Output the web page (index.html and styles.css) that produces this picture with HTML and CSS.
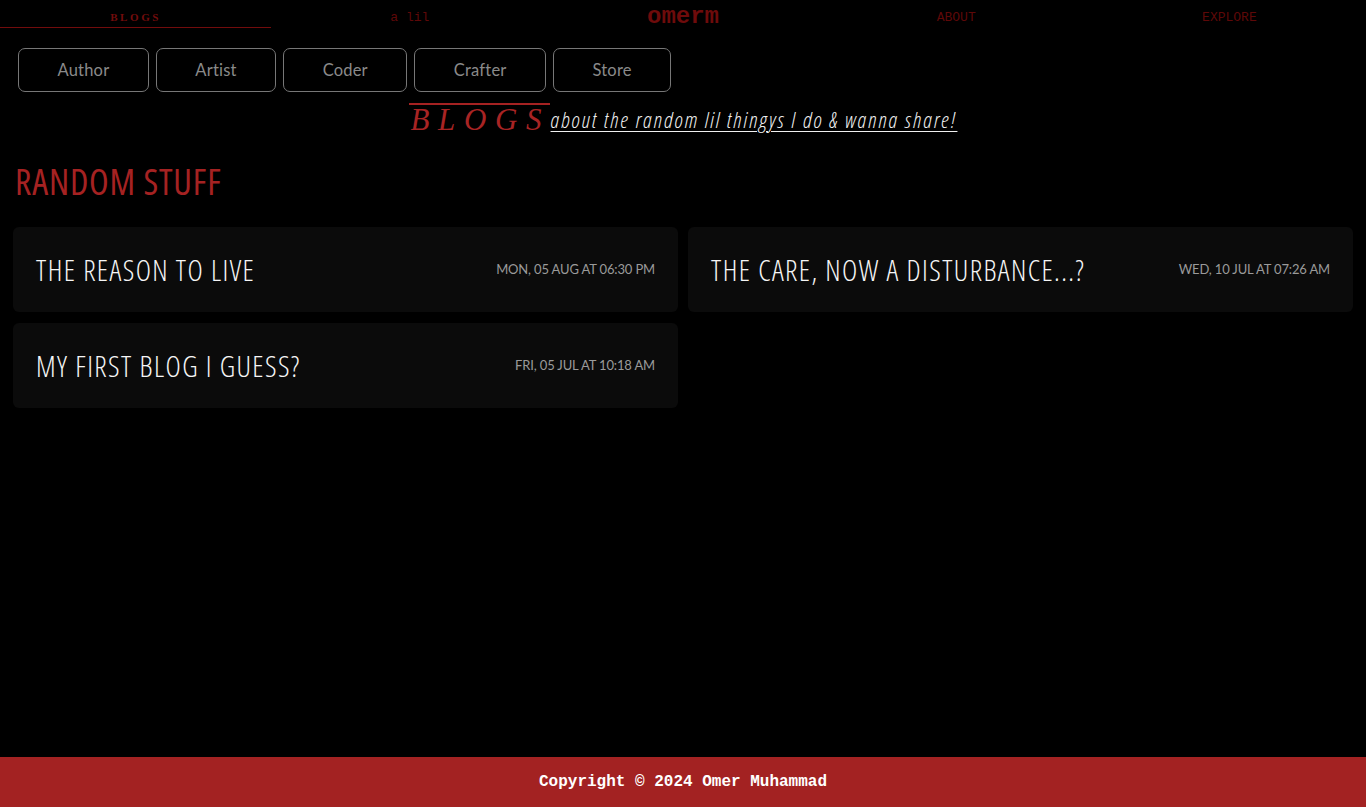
FILE: index.html
```html
<!DOCTYPE html>
<html lang="en">
<head>
<meta charset="utf-8">
<title>Blogs - omerm</title>
<link rel="stylesheet" href="styles.css">
</head>
<body>
<div class="page">
  <nav class="topnav">
    <a class="nav-item nav-active" href="#">BLOGS</a>
    <a class="nav-item nav-lil" href="#">a lil</a>
    <a class="nav-item nav-logo" href="#">omerm</a>
    <a class="nav-item nav-plain" href="#">ABOUT</a>
    <a class="nav-item nav-plain" href="#">EXPLORE</a>
  </nav>

  <div class="roles">
    <a class="role" href="#">Author</a>
    <a class="role" href="#">Artist</a>
    <a class="role" href="#">Coder</a>
    <a class="role" href="#">Crafter</a>
    <a class="role" href="#">Store</a>
  </div>

  <header class="hero">
    <h1 class="hero-title">BLOGS</h1>
    <span class="hero-sub">about the random lil thingys I do &amp; wanna share!</span>
  </header>

  <main class="content">
    <h2 class="section-title">RANDOM STUFF</h2>
    <div class="cards">
      <a class="card" href="#">
        <span class="card-title">THE REASON TO LIVE</span>
        <span class="card-date">MON, 05 AUG AT 06:30 PM</span>
      </a>
      <a class="card" href="#">
        <span class="card-title">THE CARE, NOW A DISTURBANCE...?</span>
        <span class="card-date">WED, 10 JUL AT 07:26 AM</span>
      </a>
      <a class="card" href="#">
        <span class="card-title">MY FIRST BLOG I GUESS?</span>
        <span class="card-date">FRI, 05 JUL AT 10:18 AM</span>
      </a>
    </div>
  </main>

  <footer class="footer">Copyright © 2024 Omer Muhammad</footer>
</div>
</body>
</html>
```

FILE: styles.css
```css
* { box-sizing: border-box; }

html, body {
  margin: 0;
  padding: 0;
  background: #000;
}

body {
  font-family: "Liberation Sans", Arial, sans-serif;
  color: #fff;
}

a { text-decoration: none; color: inherit; }

.page {
  min-height: 100vh;
  display: flex;
  flex-direction: column;
}

/* top nav */
.topnav {
  display: grid;
  grid-template-columns: repeat(5, 1fr);
  height: 28px;
}

.nav-item {
  display: flex;
  align-items: center;
  justify-content: center;
  padding-top: 6px;
  font-family: "Liberation Mono", "Courier New", monospace;
  font-size: 13px;
  color: #5e0808;
  height: 28px;
}

.nav-active {
  font-family: "Liberation Serif", "Times New Roman", serif;
  font-weight: bold;
  font-size: 11px;
  letter-spacing: 2.6px;
  color: #720c0c;
  border-bottom: 1px solid #720c0c;
  margin-right: 2px;
}

.nav-logo {
  font-weight: bold;
  font-size: 24px;
  color: #6e0b0b;
  padding-top: 5px;
}

.nav-plain {
  font-size: 13px;
  color: #5e0808;
}

/* role buttons */
.roles {
  display: flex;
  gap: 7px;
  padding: 20px 18px 0;
}

.role {
  height: 44px;
  display: flex;
  align-items: center;
  justify-content: center;
  padding: 0 38.5px;
  border: 1px solid #777;
  border-radius: 7px;
  color: #8a8a8a;
  font-family: Lato, "Open Sans", sans-serif;
  font-size: 16.5px;
  letter-spacing: 0.2px;
}

/* hero */
.hero {
  display: flex;
  justify-content: center;
  align-items: flex-end;
  margin-top: 11px;
}

.hero-title {
  margin: 0;
  border-top: 2px solid #a52222;
  font-family: "Liberation Serif", "Times New Roman", serif;
  font-style: italic;
  font-weight: normal;
  font-size: 31px;
  line-height: 28px;
  letter-spacing: 8.6px;
  color: #a82424;
  padding: 1px 0 0 2px;
  width: 141px;
  white-space: nowrap;
}

.hero-sub {
  font-family: "Open Sans", sans-serif;
  font-stretch: condensed;
  font-style: italic;
  font-weight: 300;
  font-size: 22px;
  line-height: 26px;
  letter-spacing: 1.9px;
  color: #f0f0f0;
  text-decoration: underline;
  text-underline-offset: 3px;
  text-decoration-thickness: 1px;
  margin-left: 1px;
  margin-bottom: 2px;
  white-space: nowrap;
}

/* content */
.content {
  flex: 1;
  padding: 0 13px;
}

.section-title {
  margin: 26px 0 0 2px;
  font-family: "Open Sans", sans-serif;
  font-stretch: condensed;
  font-weight: 400;
  font-size: 36px;
  line-height: 44px;
  letter-spacing: 0.8px;
  color: #a52222;
}

.cards {
  display: grid;
  grid-template-columns: 1fr 1fr;
  column-gap: 10px;
  row-gap: 11px;
  margin-top: 23px;
}

.card {
  height: 85px;
  background: #0b0b0b;
  border-radius: 6px;
  display: flex;
  align-items: center;
  justify-content: space-between;
  padding: 0 23px 1px;
  gap: 20px;
}

.card-title {
  font-family: "Open Sans", sans-serif;
  font-stretch: condensed;
  font-weight: 300;
  font-size: 29px;
  letter-spacing: 1.4px;
  color: #f6f6f6;
  white-space: nowrap;
}

.card-date {
  font-family: Lato, "Open Sans", sans-serif;
  font-size: 13px;
  letter-spacing: -0.15px;
  color: #9a9a9a;
  white-space: nowrap;
}

/* footer */
.footer {
  height: 50px;
  background: #a32222;
  display: flex;
  align-items: center;
  justify-content: center;
  font-family: "Liberation Mono", "Courier New", monospace;
  font-weight: bold;
  font-size: 16px;
  color: #fff;
}
```
